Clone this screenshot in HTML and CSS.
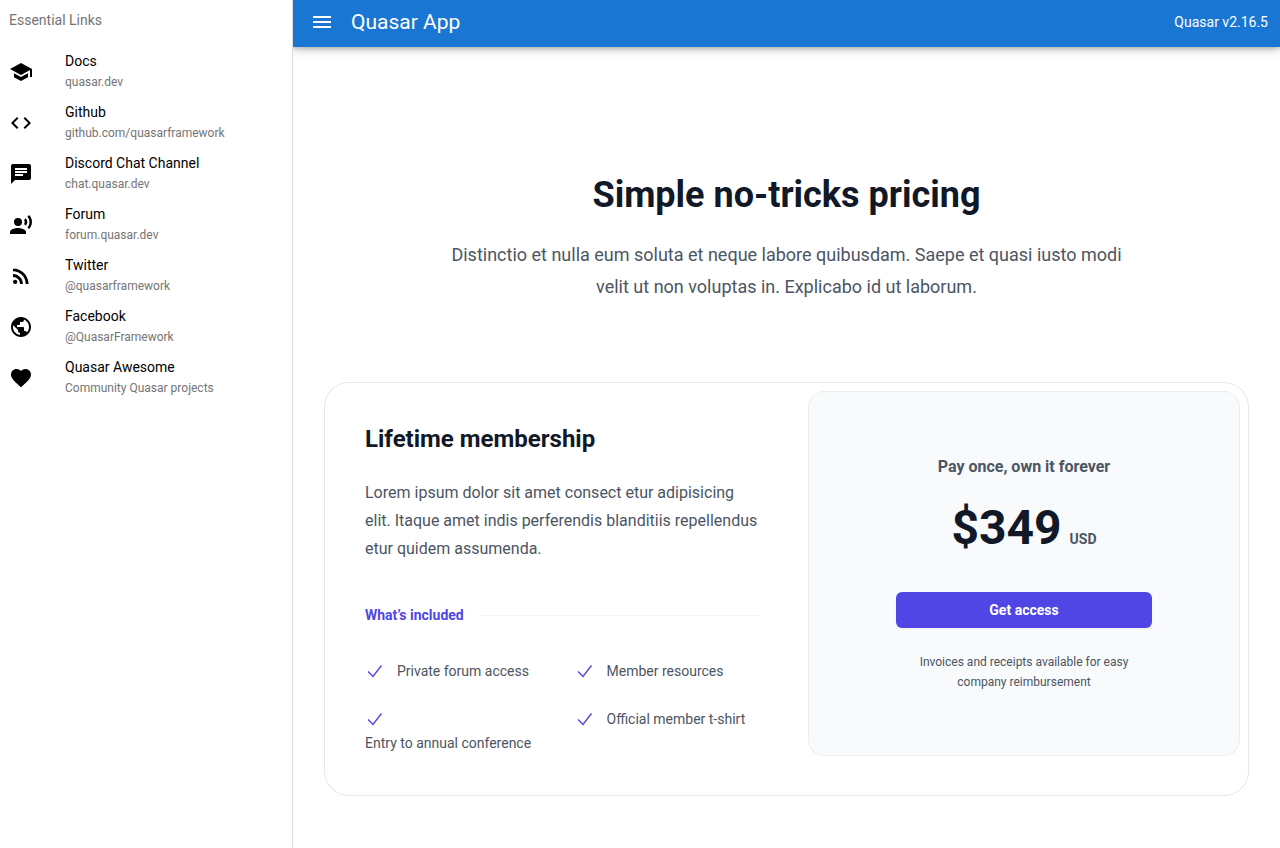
FILE: index.html
```html
<!DOCTYPE html>
<html lang="en">

<head>
    <meta charset="UTF-8">
    <meta name="viewport" content="width=device-width, initial-scale=1.0">
    <title>Quasar App</title>
    <link rel="stylesheet" href="styles.css">
</head>

<body>
    <div class="layout">
        <nav class="drawer">
            <h2 class="drawer_label">Essential Links</h2>
            <a class="item" href="#docs">
                <svg class="icon" viewBox="0 0 24 24"><path d="M5 13.18v4L12 21l7-3.82v-4L12 17l-7-3.82zM12 3L1 9l11 6 9-4.91V17h2V9L12 3z"/></svg>
                <span class="item_text">
                    <span class="item_title">Docs</span>
                    <span class="caption">quasar.dev</span>
                </span>
            </a>
            <a class="item" href="#github">
                <svg class="icon" viewBox="0 0 24 24"><path d="M9.4 16.6L4.8 12l4.6-4.6L8 6l-6 6 6 6 1.4-1.4zm5.2 0l4.6-4.6-4.6-4.6L16 6l6 6-6 6-1.4-1.4z"/></svg>
                <span class="item_text">
                    <span class="item_title">Github</span>
                    <span class="caption">github.com/quasarframework</span>
                </span>
            </a>
            <a class="item" href="#chat">
                <svg class="icon" viewBox="0 0 24 24"><path d="M20 2H4c-1.1 0-1.99.9-1.99 2L2 22l4-4h14c1.1 0 2-.9 2-2V4c0-1.1-.9-2-2-2zM6 9h12v2H6V9zm8 5H6v-2h8v2zm4-6H6V6h12v2z"/></svg>
                <span class="item_text">
                    <span class="item_title">Discord Chat Channel</span>
                    <span class="caption">chat.quasar.dev</span>
                </span>
            </a>
            <a class="item" href="#forum">
                <svg class="icon" viewBox="0 0 24 24"><circle cx="9" cy="9" r="4"/><path d="M9 15c-2.67 0-8 1.34-8 4v2h16v-2c0-2.66-5.33-4-8-4zm7.76-9.64l-1.68 1.69c.84 1.18.84 2.71 0 3.89l1.68 1.69c2.02-2.02 2.02-5.07 0-7.27zM20.07 2l-1.63 1.63c2.77 3.02 2.77 7.56 0 10.74L20.07 16c3.9-3.89 3.91-9.95 0-14z"/></svg>
                <span class="item_text">
                    <span class="item_title">Forum</span>
                    <span class="caption">forum.quasar.dev</span>
                </span>
            </a>
            <a class="item" href="#twitter">
                <svg class="icon" viewBox="0 0 24 24"><circle cx="6.18" cy="17.82" r="2.18"/><path d="M4 4.44v2.83c7.03 0 12.73 5.7 12.73 12.73h2.83c0-8.59-6.97-15.56-15.56-15.56zm0 5.66v2.83c3.9 0 7.07 3.17 7.07 7.07h2.83c0-5.47-4.43-9.9-9.9-9.9z"/></svg>
                <span class="item_text">
                    <span class="item_title">Twitter</span>
                    <span class="caption">@quasarframework</span>
                </span>
            </a>
            <a class="item" href="#facebook">
                <svg class="icon" viewBox="0 0 24 24"><path d="M12 2C6.48 2 2 6.48 2 12s4.48 10 10 10 10-4.48 10-10S17.52 2 12 2zm-1 17.93c-3.95-.49-7-3.85-7-7.93 0-.62.08-1.21.21-1.79L9 15v1c0 1.1.9 2 2 2v1.93zm6.9-2.54c-.26-.81-1-1.39-1.9-1.39h-1v-3c0-.55-.45-1-1-1H8v-2h2c.55 0 1-.45 1-1V7h2c1.1 0 2-.9 2-2v-.41c2.93 1.19 5 4.06 5 7.41 0 2.08-.8 3.97-2.1 5.39z"/></svg>
                <span class="item_text">
                    <span class="item_title">Facebook</span>
                    <span class="caption">@QuasarFramework</span>
                </span>
            </a>
            <a class="item" href="#awesome">
                <svg class="icon" viewBox="0 0 24 24"><path d="M12 21.35l-1.45-1.32C5.4 15.36 2 12.28 2 8.5 2 5.42 4.42 3 7.5 3c1.74 0 3.41.81 4.5 2.09C13.09 3.81 14.76 3 16.5 3 19.58 3 22 5.42 22 8.5c0 3.78-3.4 6.86-8.55 11.54L12 21.35z"/></svg>
                <span class="item_text">
                    <span class="item_title">Quasar Awesome</span>
                    <span class="caption">Community Quasar projects</span>
                </span>
            </a>
        </nav>

        <div class="page">
            <header class="toolbar">
                <button class="menu_btn" type="button" aria-label="Menu">
                    <svg class="icon" viewBox="0 0 24 24"><path d="M3 18h18v-2H3v2zm0-5h18v-2H3v2zm0-7v2h18V6H3z"/></svg>
                </button>
                <div class="toolbar_title">Quasar App</div>
                <div>Quasar v2.16.5</div>
            </header>

            <main class="pricing">
                <div class="intro">
                    <h1>Simple no-tricks pricing</h1>
                    <p>Distinctio et nulla eum soluta et neque labore quibusdam. Saepe et quasi iusto modi velit ut non voluptas in. Explicabo id ut laborum.</p>
                </div>

                <section class="card">
                    <div class="plan">
                        <h3>Lifetime membership</h3>
                        <p class="plan_text">Lorem ipsum dolor sit amet consect etur adipisicing elit. Itaque amet indis perferendis blanditiis repellendus etur quidem assumenda.</p>
                        <div class="included">
                            <h4>What’s included</h4>
                            <div class="line"></div>
                        </div>
                        <ul class="features">
                            <li><svg class="check" viewBox="0 0 20 20"><path d="M3 10.5l5 5 8.5-11"/></svg><span>Private forum access</span></li>
                            <li><svg class="check" viewBox="0 0 20 20"><path d="M3 10.5l5 5 8.5-11"/></svg><span>Member resources</span></li>
                            <li><svg class="check" viewBox="0 0 20 20"><path d="M3 10.5l5 5 8.5-11"/></svg><span>Entry to annual conference</span></li>
                            <li><svg class="check" viewBox="0 0 20 20"><path d="M3 10.5l5 5 8.5-11"/></svg><span>Official member t-shirt</span></li>
                        </ul>
                    </div>
                    <div class="side">
                        <div class="price_box">
                            <p class="price_head">Pay once, own it forever</p>
                            <p class="price"><span class="amount">$349</span><span class="currency">USD</span></p>
                            <a class="buy" href="#buy">Get access</a>
                            <p class="note">Invoices and receipts available for easy company reimbursement</p>
                        </div>
                    </div>
                </section>
            </main>
        </div>
    </div>
</body>

</html>
```
FILE: styles.css
```css
* {
    box-sizing: border-box;
}

body {
    margin: 0;
    background-color: white;
    color: black;
    font-family: Roboto, "Liberation Sans", sans-serif;
    font-size: 14px;
    line-height: 20px;
}

h1, h2, h3, h4, p, ul {
    margin: 0;
    padding: 0;
}

a {
    color: inherit;
    text-decoration: none;
}

.layout {
    display: flex;
    min-height: 100vh;
}

/* left drawer */
.drawer {
    flex: 0 0 293px;
    border-right: 1px solid #dddddd;
    background-color: white;
    z-index: 1;
}

.drawer_label {
    padding: 10px 9px 16px;
    font-size: 14px;
    font-weight: 400;
    color: #757575;
}

.item {
    display: flex;
    align-items: center;
    gap: 32px;
    padding: 5px 9px;
}

.item_text {
    display: flex;
    flex-direction: column;
    gap: 1px;
}

.caption {
    font-size: 12px;
    color: #757575;
}

.icon {
    display: block;
    width: 24px;
    height: 24px;
    fill: currentColor;
}

/* right side */
.page {
    flex: 1;
    min-width: 0;
}

.toolbar {
    display: flex;
    align-items: center;
    height: 47px;
    padding: 0 12px 3px 17px;
    background-color: #1976d2;
    color: white;
    box-shadow: 0 1px 5px rgba(0, 0, 0, 0.2), 0 2px 10px rgba(0, 0, 0, 0.24);
}

.menu_btn {
    padding: 0;
    border: none;
    background: none;
    color: white;
    cursor: pointer;
}

.toolbar_title {
    flex: 1;
    padding-left: 17px;
    font-size: 21px;
}

.pricing {
    padding: 128px 32px 32px;
    color: #4b5563;
}

.intro {
    max-width: 672px;
    margin: 0 auto;
    text-align: center;
}

h1, h3, .amount {
    color: #111827;
    font-weight: 700;
}

h1 {
    font-size: 36px;
    line-height: 40px;
}

.intro p {
    margin-top: 24px;
    font-size: 18px;
    line-height: 32px;
}

.card {
    display: flex;
    margin-top: 80px;
    border-radius: 24px;
    box-shadow: 0 0 0 1px #e5e7eb;
}

.plan {
    flex: 1;
    padding: 40px;
}

h3 {
    font-size: 24px;
    line-height: 32px;
}

.plan_text {
    margin-top: 24px;
    font-size: 16px;
    line-height: 28px;
}

.included {
    display: flex;
    align-items: center;
    gap: 16px;
    margin-top: 40px;
}

h4 {
    color: #4f46e5;
    font-size: 14px;
    font-weight: 700;
    line-height: 24px;
}

.line {
    flex: 1;
    height: 1px;
    background-color: #f3f4f6;
}

.features {
    display: grid;
    grid-template-columns: 1fr 1fr;
    gap: 24px;
    margin-top: 32px;
    line-height: 24px;
    list-style: none;
}

.features li {
    display: flex;
    flex-wrap: wrap;
    align-items: center;
    align-content: flex-start;
    column-gap: 12px;
}

.check {
    width: 20px;
    height: 24px;
    fill: none;
    stroke: #4f46e5;
    stroke-width: 1.4;
}

.side {
    flex: 0 0 448px;
    padding: 8px;
}

.price_box {
    padding: 64px 88px;
    border-radius: 16px;
    background-color: #f9fafb;
    box-shadow: inset 0 0 0 1px #eceef1;
    text-align: center;
}

.price_head {
    font-size: 16px;
    font-weight: 700;
    line-height: 24px;
}

.price {
    display: flex;
    justify-content: center;
    align-items: baseline;
    gap: 8px;
    margin-top: 24px;
}

.amount {
    font-size: 48px;
    line-height: 49px;
}

.currency {
    font-weight: 700;
    line-height: 24px;
}

.buy {
    display: block;
    margin-top: 40px;
    padding: 8px 12px;
    border-radius: 6px;
    background-color: #4f46e5;
    color: white;
    font-weight: 700;
    box-shadow: 0 1px 2px rgba(0, 0, 0, 0.05);
}

.note {
    margin-top: 24px;
    font-size: 12px;
}
```
